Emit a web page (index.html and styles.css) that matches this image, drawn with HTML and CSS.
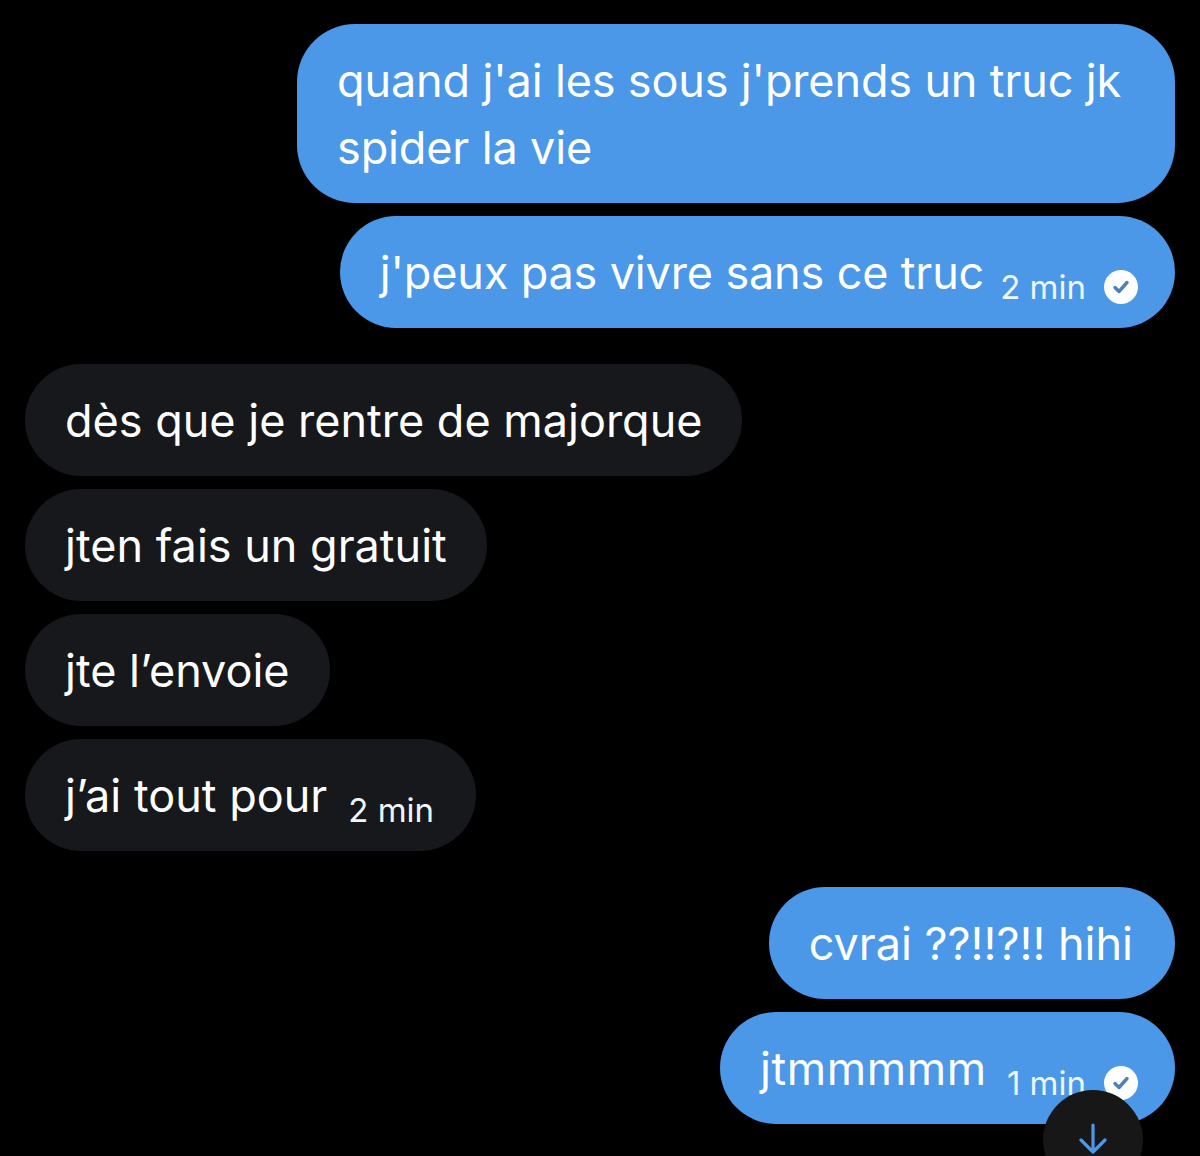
FILE: index.html
```html
<!DOCTYPE html>
<html lang="fr">
<head>
  <meta charset="UTF-8" />
  <title>Messages</title>
  <link rel="stylesheet" href="styles.css">
</head>
<body>
  <div class="chat">
    <div class="group sent">
      <div class="bubble two-line">quand j'ai les sous j'prends un truc jk<br>spider la vie</div>
      <div class="bubble">j'peux pas vivre sans ce truc
        <span class="time">2 min</span>
        <svg class="check" viewBox="0 0 34 34"><circle cx="17" cy="17" r="17" fill="#fff"/><path d="M11 17.500l4 4 8-9" fill="none" stroke="#4f80b8" stroke-width="3.400" stroke-linecap="round" stroke-linejoin="round"/></svg>
      </div>
    </div>
    <div class="group received">
      <div class="bubble">dès que je rentre de majorque</div>
      <div class="bubble">jten fais un gratuit</div>
      <div class="bubble">jte l’envoie</div>
      <div class="bubble">j’ai tout pour <span class="time">2 min</span></div>
    </div>
    <div class="group sent">
      <div class="bubble short">cvrai ??!!?!! hihi</div>
      <div class="bubble wide">jtmmmmm
        <span class="time">1 min</span>
        <svg class="check" viewBox="0 0 34 34"><circle cx="17" cy="17" r="17" fill="#fff"/><path d="M11 17.500l4 4 8-9" fill="none" stroke="#4f80b8" stroke-width="3.400" stroke-linecap="round" stroke-linejoin="round"/></svg>
      </div>
    </div>
  </div>
  <div class="scroll-down">
    <svg viewBox="0 0 28 32" width="28" height="32"><path d="M14 2v27M2 17l12 12 12-12" fill="none" stroke="#4b97e8" stroke-width="3.200" stroke-linecap="round" stroke-linejoin="round"/></svg>
  </div>
</body>
</html>
```

FILE: styles.css
```css
html, body {
  margin: 0;
  height: 100%;
  background: #000;
  overflow: hidden;
}
body {
  position: relative;
  font-family: Inter, "Liberation Sans", sans-serif;
}
.chat {
  display: flex;
  flex-direction: column;
  gap: 36px;
  padding: 24px 25px 0;
}
.group {
  display: flex;
  flex-direction: column;
  gap: 13px;
}
.sent {
  align-items: flex-end;
}
.received {
  align-items: flex-start;
}
.bubble {
  display: flex;
  align-items: center;
  height: 112px;
  box-sizing: border-box;
  padding: 0 40px;
  border-radius: 56px;
  font-size: 45px;
  color: #fff;
  white-space: nowrap;
}
.two-line {
  display: block;
  height: 179px;
  padding: 23px 54px 0 40px;
  border-radius: 58px;
  line-height: 67px;
}
.sent .bubble {
  background: #4b97e8;
  letter-spacing: -0.15px;
}
.sent .short {
  padding-right: 42px;
  letter-spacing: 0;
}
.sent .wide {
  letter-spacing: 0.6px;
}
.received .bubble {
  background: #16181b;
}
.time {
  font-size: 33px;
  letter-spacing: 0;
  color: #eef5fd;
  margin: 29px 2px 0 21px;
}
.sent .time {
  margin: 29px 0 0 16px;
}
.sent .wide .time {
  margin-left: 20px;
}
.check {
  width: 34px;
  height: 34px;
  margin: 30px -3px 0 18px;
}
.scroll-down {
  position: absolute;
  left: 1043px;
  top: 1090px;
  width: 100px;
  height: 100px;
  border-radius: 50%;
  background: #171717;
  display: flex;
  justify-content: center;
  padding-top: 33px;
  box-sizing: border-box;
}
```
